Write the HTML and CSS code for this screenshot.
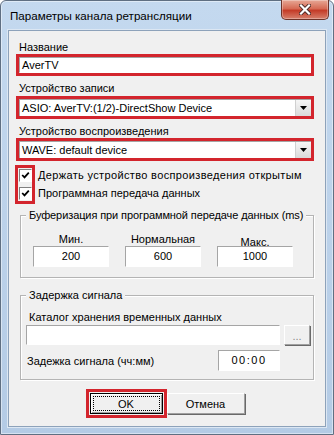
FILE: index.html
```html
<!DOCTYPE html>
<html lang="ru">
<head>
    <meta charset="UTF-8">
    <title>Параметры канала ретрансляции</title>
    <link rel="stylesheet" href="styles.css">
</head>
<body>

    <div class="window">
        <div class="titlebar">
            <span class="title">Параметры канала ретрансляции</span>
            <div class="close-btn">
                <svg width="12" height="11" viewBox="0 0 12 11">
                    <path d="M2 1.5 L10 9.5 M10 1.5 L2 9.5" stroke="#4b2a26" stroke-width="4" stroke-linecap="square"/>
                    <path d="M2 1.5 L10 9.5 M10 1.5 L2 9.5" stroke="#fff" stroke-width="2.2" stroke-linecap="square"/>
                </svg>
            </div>
        </div>

        <div class="client">
            <div class="label label-first">Название</div>
            <div class="mark">
                <div class="edit">AverTV</div>
            </div>

            <div class="label">Устройство записи</div>
            <div class="mark mark-combo">
                <div class="combo">
                    <span class="combo-text">ASIO: AverTV:(1/2)-DirectShow Device</span>
                    <span class="combo-btn">
                        <svg width="7" height="4" viewBox="0 0 7 4"><path d="M0 0 H7 L3.5 4 Z" fill="#000"/></svg>
                    </span>
                </div>
            </div>

            <div class="label">Устройство воспроизведения</div>
            <div class="mark">
                <div class="combo">
                    <span class="combo-text">WAVE: default device</span>
                    <span class="combo-btn">
                        <svg width="7" height="4" viewBox="0 0 7 4"><path d="M0 0 H7 L3.5 4 Z" fill="#000"/></svg>
                    </span>
                </div>
            </div>

            <div class="checks">
                <div class="mark check-col">
                    <span class="checkbox">
                        <svg width="9" height="9" viewBox="0 0 9 9"><path d="M1.2 4 L3.5 6.4 L7.8 1.6" stroke="#000" stroke-width="1.8" fill="none"/></svg>
                    </span>
                    <span class="checkbox">
                        <svg width="9" height="9" viewBox="0 0 9 9"><path d="M1.2 4 L3.5 6.4 L7.8 1.6" stroke="#000" stroke-width="1.8" fill="none"/></svg>
                    </span>
                </div>
                <div class="check-labels">
                    <span class="wide">Держать устройство воспроизведения открытым</span>
                    <span>Программная передача данных</span>
                </div>
            </div>

            <div class="group group-buffer">
                <span class="group-title">Буферизация при программной передаче данных (ms)</span>
                <div class="buffer-row">
                    <div class="buffer-col">
                        <div class="buffer-label">Мин.</div>
                        <div class="edit edit-num">200</div>
                    </div>
                    <div class="buffer-col">
                        <div class="buffer-label">Нормальная</div>
                        <div class="edit edit-num">600</div>
                    </div>
                    <div class="buffer-col">
                        <div class="buffer-label low">Макс.</div>
                        <div class="edit edit-num">1000</div>
                    </div>
                </div>
            </div>

            <div class="group group-delay">
                <span class="group-title">Задержка сигнала</span>
                <div class="label label-dir">Каталог хранения временных данных</div>
                <div class="path-row">
                    <div class="edit path-edit"></div>
                    <div class="btn browse-btn">...</div>
                </div>
                <div class="delay-row">
                    <span class="delay-label">Задежка сигнала (чч:мм)</span>
                    <div class="edit time-edit">00:00</div>
                </div>
            </div>

            <div class="buttons">
                <div class="mark ok-mark">
                    <div class="btn btn-default"><span class="focus">OK</span></div>
                </div>
                <div class="btn btn-cancel">Отмена</div>
            </div>
        </div>
    </div>

</body>
</html>
```

FILE: styles.css
```css
body {
    margin: 0;
    font-family: 'Liberation Sans', Arial, sans-serif;
    font-size: 11px;
    color: #000;
    background: #fff;
}
.window {
    width: 334px;
    height: 435px;
    box-sizing: border-box;
    border: 1px solid #5f6f82;
    border-radius: 6px 6px 0 0;
    background: linear-gradient(to bottom, #c4d9ef, #b4cbe5);
    box-shadow: inset 0 0 0 1px rgba(255, 255, 255, 0.45);
    padding: 0 7px 7px 7px;
    display: flex;
    flex-direction: column;
}
.titlebar {
    height: 29px;
    display: flex;
    justify-content: space-between;
    align-items: flex-start;
}
.title {
    margin: 7px 0 0 2px;
    font-size: 11.6px;
    line-height: 16px;
}
.close-btn {
    width: 46px;
    height: 19px;
    margin: -1px -3px 0 0;
    border: 1px solid #6e3329;
    border-top: none;
    border-radius: 0 0 5px 5px;
    background: linear-gradient(to bottom, #e7a896, #d66b55 45%, #c43c28 55%, #d7806c);
    box-shadow: inset 0 0 0 1px rgba(255, 255, 255, 0.3);
    display: flex;
    justify-content: center;
    align-items: center;
}
.client {
    flex: 1;
    border: 1px solid #8da2ba;
    box-shadow: 0 0 0 1px #dce7f3;
    background: #f0f0f0;
    padding: 0 11px 0 7px;
    display: flex;
    flex-direction: column;
}
.label {
    line-height: 13px;
    margin: 6px 0 0 3px;
}
.label-first {
    margin-top: 10px;
}
.mark {
    border: 3px solid #d3252d;
}
.mark-combo {
    margin-top: 1px;
}
.edit {
    background: #fff;
    border: 1px solid;
    border-color: #a5a5a5 #fff #fff #a5a5a5;
    line-height: 14px;
    padding-left: 2px;
    white-space: nowrap;
}
.combo {
    height: 16px;
    background: #fff;
    border-top: 1px solid #a5a5a5;
    border-left: 1px solid #a5a5a5;
    display: flex;
    align-items: center;
}
.combo-text {
    flex: 1;
    padding-left: 2px;
    white-space: nowrap;
}
.combo-btn {
    width: 15px;
    height: 16px;
    background: linear-gradient(to bottom, #f6f6f6, #dadada);
    border-left: 1px solid #d0d0d0;
    display: flex;
    justify-content: center;
    align-items: center;
}
.checks {
    display: flex;
    margin-top: 4px;
}
.check-col {
    margin-left: -1px;
    width: 14px;
    padding: 1px 0 0 0;
    display: flex;
    flex-direction: column;
    gap: 5px;
    height: 32px;
    box-sizing: content-box;
}
.checkbox {
    width: 11px;
    height: 11px;
    margin-left: 1px;
    background: #fff;
    border: 1px solid;
    border-color: #808080 #fff #fff #808080;
    display: flex;
    justify-content: center;
    align-items: center;
}
.check-labels {
    display: flex;
    flex-direction: column;
    gap: 5px;
    padding-top: 4px;
    margin-left: 3px;
    line-height: 13px;
    white-space: nowrap;
}
.check-labels .wide {
    letter-spacing: 0.35px;
}
.group {
    border: 1px solid #b4b4b4;
    box-shadow: inset 1px 1px 0 #fff, 1px 1px 0 #fff;
    margin-left: 4px;
    display: flex;
    flex-direction: column;
}
.group-title {
    align-self: flex-start;
    margin: -7px 0 0 5px;
    padding: 0 3px;
    line-height: 13px;
    background: #f0f0f0;
    white-space: nowrap;
}
.group-buffer {
    margin-top: 11px;
    padding-bottom: 10px;
}
.group-buffer .group-title {
    letter-spacing: -0.1px;
}
.buffer-row {
    display: flex;
    gap: 16px;
    padding-left: 12px;
    margin-top: 11px;
}
.buffer-col {
    width: 76px;
    display: flex;
    flex-direction: column;
}
.buffer-label {
    height: 13px;
    line-height: 13px;
    text-align: center;
}
.buffer-label.low {
    line-height: 19px;
}
.edit-num {
    height: 19px;
    line-height: 19px;
    text-align: center;
    padding: 0;
}
.group-delay {
    margin-top: 17px;
    padding: 0 3px 8px 5px;
}
.group-delay .group-title {
    margin-left: 0;
}
.label-dir {
    margin-top: 9px;
}
.path-row {
    display: flex;
    gap: 4px;
    margin-top: 1px;
}
.path-edit {
    width: 250px;
    height: 18px;
}
.btn {
    background: #f0f0f0;
    border: 1px solid;
    border-color: #fff #a0a0a0 #a0a0a0 #fff;
    box-shadow: 1px 1px 0 #696969;
    box-sizing: border-box;
    display: flex;
    justify-content: center;
    align-items: center;
}
.browse-btn {
    width: 26px;
    height: 20px;
    color: #8a8a8a;
    line-height: 10px;
    align-items: flex-end;
    padding-bottom: 3px;
}
.delay-row {
    display: flex;
    align-items: center;
    margin-top: 5px;
}
.delay-label {
    flex: 1;
    margin-left: 1px;
}
.time-edit {
    width: 62px;
    height: 21px;
    line-height: 19px;
    box-sizing: border-box;
    margin-right: 30px;
    text-align: center;
    letter-spacing: 1.5px;
    padding: 0;
}
.buttons {
    display: flex;
    justify-content: center;
    align-items: center;
    margin-top: 9px;
}
.ok-mark {
    padding: 1px;
}
.btn-default {
    width: 73px;
    height: 21px;
    border: 1px solid #000;
    box-shadow: inset 1px 1px 0 #fff, inset -1px -1px 0 #a0a0a0;
    padding: 2px;
}
.focus {
    flex: 1;
    align-self: stretch;
    border: 1px dotted #000;
    display: flex;
    justify-content: center;
    align-items: center;
}
.btn-cancel {
    width: 78px;
    height: 21px;
}
```
